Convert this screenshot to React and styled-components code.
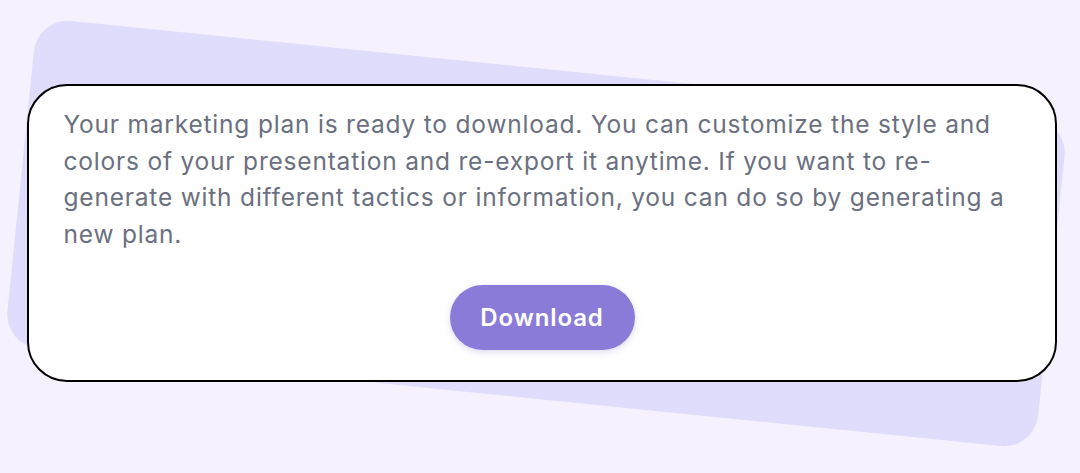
import React from "react";
import styled, { createGlobalStyle } from "styled-components";

const GlobalStyle = createGlobalStyle`
  html, body {
    margin: 0;
    padding: 0;
    background: #f6f1fe;
    font-family: Inter, "Noto Sans", sans-serif;
  }
`;

const Page = styled.div`
  width: 1080px;
  height: 473px;
  box-sizing: border-box;
  padding: 84px 23px 0 27px;
  overflow: hidden;
`;

const Stack = styled.div`
  display: grid;
  grid-template-columns: 1030px;
  grid-template-rows: 298px;
`;

const BackCard = styled.div`
  grid-area: 1 / 1;
  align-self: center;
  justify-self: center;
  width: 1036px;
  height: 329px;
  border-radius: 34px;
  background: #dfdcfc;
  transform: translateX(-6px) rotate(5.8deg);
`;

const Card = styled.div`
  grid-area: 1 / 1;
  position: relative;
  box-sizing: border-box;
  width: 1030px;
  height: 298px;
  padding: 20px 34.5px 0;
  border: 2.5px solid #000;
  border-radius: 40px;
  background: #fff;
  display: flex;
  flex-direction: column;
  align-items: center;
`;

const Message = styled.p`
  margin: 0;
  padding-right: 5.5px;
  align-self: stretch;
  font-size: 24.5px;
  letter-spacing: 0.8px;
  line-height: 36.7px;
  color: #6b7080;
  font-weight: 400;
`;

const DownloadButton = styled.button`
  margin-top: 32px;
  width: 185px;
  height: 65px;
  border: none;
  border-radius: 33px;
  background: #8b7bd8;
  color: #fff;
  font-family: Inter, "Noto Sans", sans-serif;
  font-size: 24px;
  letter-spacing: 0.9px;
  font-weight: 600;
  box-shadow: 0 2px 6px rgba(120, 100, 200, 0.25);
  cursor: pointer;
`;

export default function App() {
  return (
    <>
      <GlobalStyle />
      <Page>
        <Stack>
          <BackCard />
          <Card>
            <Message>
              Your marketing plan is ready to download. You can customize the
              style and colors of your presentation and re-export it anytime.
              If you want to re-generate with different tactics or
              information, you can do so by generating a new plan.
            </Message>
            <DownloadButton>Download</DownloadButton>
          </Card>
        </Stack>
      </Page>
    </>
  );
}
